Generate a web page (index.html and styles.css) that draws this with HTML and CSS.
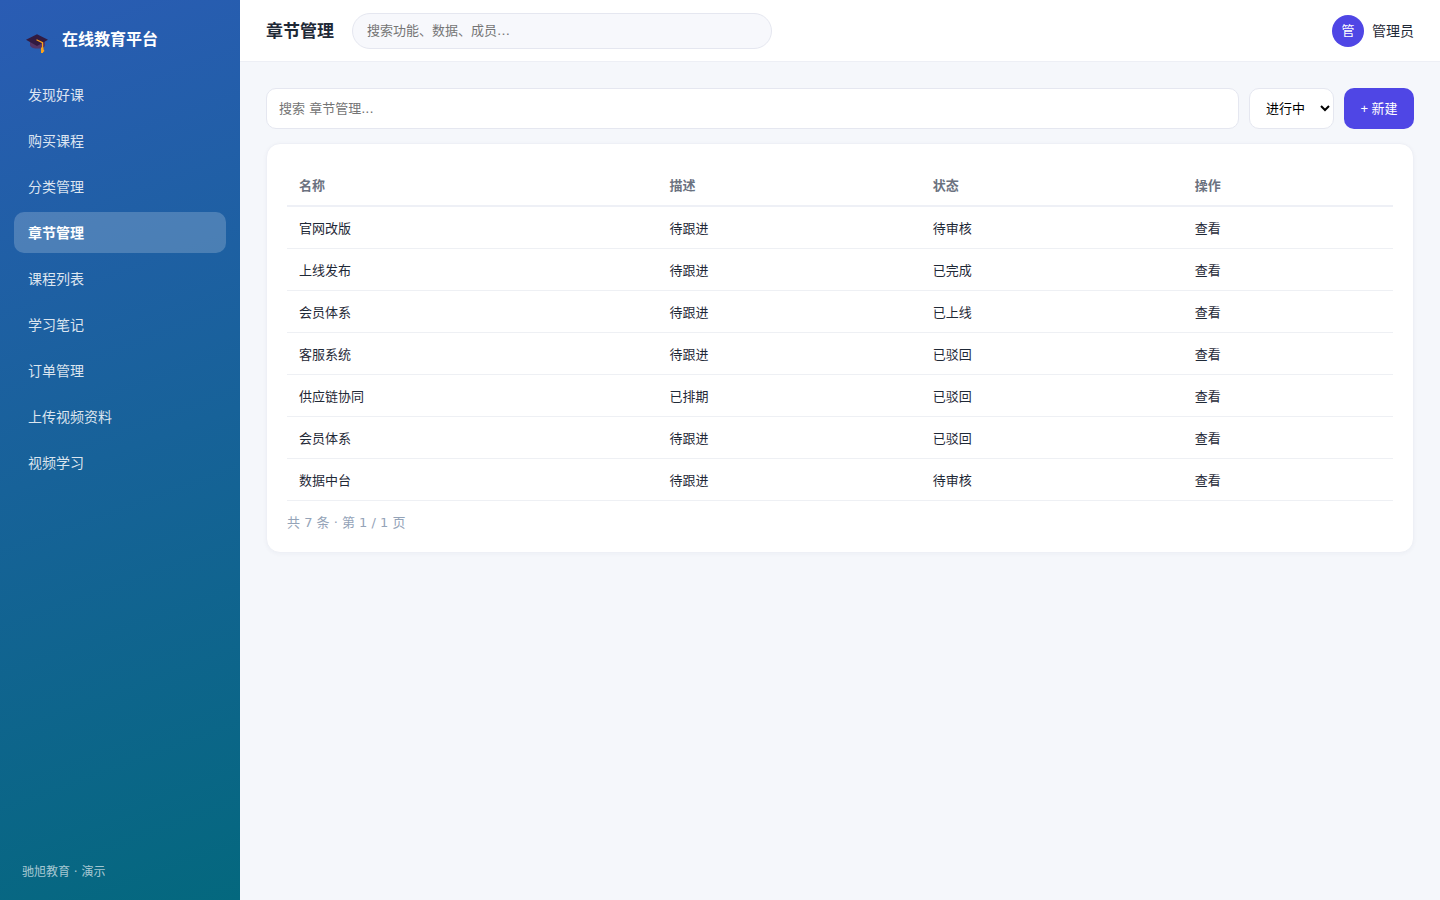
FILE: index.html
```html
<!DOCTYPE html>
<html lang="zh-CN">
<head>
<meta charset="utf-8">
<meta name="viewport" content="width=device-width, initial-scale=1">
<title>章节管理 - 在线教育平台</title>
<link rel="stylesheet" href="styles.css">
</head>
<body>
<div class="app">
  <aside class="sidebar">
    <div class="brand">
      <svg class="brand-icon" viewBox="0 0 24 24" aria-hidden="true">
        <path d="M4 11v4.500c1 2.500 4 3 8 3s6-.5 7-3V11z" fill="#533566"/>
        <path d="M0 9.800 11 4.200 22 9.800 11 16z" fill="#321b41"/>
        <path d="M10.500 9.700 16.500 12.600V18" fill="none" stroke="#fba31c" stroke-width="1.200"/>
        <path d="M15 17.500h2.500v2l.7.500v1.500l-1 .5-.2 1h-2z" fill="#fba31c"/>
      </svg>
      <span>在线教育平台</span>
    </div>
    <nav class="nav">
      <a class="nav-item" href="#">发现好课</a>
      <a class="nav-item" href="#">购买课程</a>
      <a class="nav-item" href="#">分类管理</a>
      <a class="nav-item active" href="#" aria-current="page">章节管理</a>
      <a class="nav-item" href="#">课程列表</a>
      <a class="nav-item" href="#">学习笔记</a>
      <a class="nav-item" href="#">订单管理</a>
      <a class="nav-item" href="#">上传视频资料</a>
      <a class="nav-item" href="#">视频学习</a>
    </nav>
    <div class="sidebar-foot">驰旭教育 · 演示</div>
  </aside>
  <div class="main">
    <header class="topbar">
      <h1 class="title">章节管理</h1>
      <input class="global-search" type="search" aria-label="全局搜索" placeholder="搜索功能、数据、成员…">
      <div class="user"><span class="avatar">管</span><span>管理员</span></div>
    </header>
    <main class="content">
      <div class="toolbar">
        <input class="field filter" type="text" aria-label="搜索章节" placeholder="搜索 章节管理...">
        <select class="field status" aria-label="状态"><option>进行中</option></select>
        <button class="create" type="button">+ 新建</button>
      </div>
      <section class="card">
        <table class="table">
          <thead><tr><th class="col-name">名称</th><th class="col-desc">描述</th><th class="col-state">状态</th><th>操作</th></tr></thead>
          <tbody>
            <tr><td>官网改版</td><td>待跟进</td><td>待审核</td><td>查看</td></tr>
            <tr><td>上线发布</td><td>待跟进</td><td>已完成</td><td>查看</td></tr>
            <tr><td>会员体系</td><td>待跟进</td><td>已上线</td><td>查看</td></tr>
            <tr><td>客服系统</td><td>待跟进</td><td>已驳回</td><td>查看</td></tr>
            <tr><td>供应链协同</td><td>已排期</td><td>已驳回</td><td>查看</td></tr>
            <tr><td>会员体系</td><td>待跟进</td><td>已驳回</td><td>查看</td></tr>
            <tr><td>数据中台</td><td>待跟进</td><td>待审核</td><td>查看</td></tr>
          </tbody>
        </table>
        <div class="pager">共 7 条 · 第 1 / 1 页</div>
      </section>
    </main>
  </div>
</div>
</body>
</html>
```
FILE: styles.css
```css
* { box-sizing: border-box; }
body {
  margin: 0;
  background: #f5f7fb;
  color: #1f2937;
  font: 14px/20px "DejaVu Sans", "Noto Sans CJK SC", sans-serif;
}
input, select, button { font: inherit; }
.app { display: flex; min-height: 100vh; }
.sidebar {
  flex: 0 0 240px;
  display: flex;
  flex-direction: column;
  padding: 22px 14px 18px;
  background: linear-gradient(160deg, #2a5cb4, #04687e);
  color: #fff;
}
.brand {
  display: flex;
  align-items: center;
  gap: 12px;
  height: 36px;
  padding: 0 12px;
  margin-bottom: 16px;
  font-size: 16px;
  line-height: 22px;
  font-weight: 700;
}
.brand-icon { width: 24px; height: 24px; margin-top: 4px; }
.nav { display: flex; flex-direction: column; gap: 5px; }
.nav-item {
  padding: 11px 14px 9px;
  border-radius: 10px;
  line-height: 21px;
  color: rgba(255, 255, 255, .85);
  text-decoration: none;
}
.nav-item.active { background: rgba(255, 255, 255, .2); color: #fff; font-weight: 700; }
.sidebar-foot { margin-top: auto; padding: 0 8px; font-size: 12px; color: rgba(255, 255, 255, .65); }
.main { flex: 1; min-width: 0; }
.topbar {
  display: flex;
  align-items: center;
  gap: 18px;
  height: 62px;
  padding: 0 26px;
  background: #fff;
  border-bottom: 1px solid #edeff5;
}
.title { margin: 0; font-size: 17px; line-height: 22px; }
.global-search {
  appearance: none;
  width: 420px;
  height: 36px;
  padding: 0 14px;
  border: 1px solid #e5e7f0;
  border-radius: 18px;
  background: #f7f8fc;
  font-size: 13px;
}
::placeholder { color: #757575; }
.user { display: flex; align-items: center; gap: 8px; margin-left: auto; }
.avatar {
  display: grid;
  place-items: center;
  width: 32px;
  height: 32px;
  border-radius: 50%;
  background: #4f46e5;
  color: #fff;
  font-size: 13px;
}
.content { padding: 26px; }
.toolbar { display: flex; gap: 10px; margin-bottom: 14px; }
.field {
  height: 41px;
  border: 1px solid #e5e7f0;
  border-radius: 10px;
  background: #fff;
  font-size: 13px;
}
.filter { flex: 1; min-width: 0; padding: 0 12px; }
.status { width: 85px; padding: 0 0 0 12px; color: #000; }
.create {
  width: 70px;
  height: 41px;
  padding: 0;
  border: 0;
  border-radius: 10px;
  background: #4f46e5;
  color: #fff;
  font-family: "Liberation Sans", "Noto Sans CJK SC", sans-serif;
  font-size: 13px;
}
.card {
  padding: 20px;
  border: 1px solid #eef0f6;
  border-radius: 14px;
  background: #fff;
  box-shadow: 0 1px 4px rgba(30, 41, 90, .04);
}
.table { width: 100%; border-collapse: separate; border-spacing: 0; font-size: 13px; }
.table th, .table td { padding: 12px 12px 9px; text-align: left; border-bottom: 1px solid #eef0f4; }
.table th { border-bottom: 2px solid #eef0f6; color: #6b7280; font-weight: 700; }
.col-name { width: 33.5%; }
.col-desc { width: 23.8%; }
.col-state { width: 23.7%; }
.pager { margin-top: 12px; font-size: 13px; line-height: 19px; color: #94a3b8; }
```
